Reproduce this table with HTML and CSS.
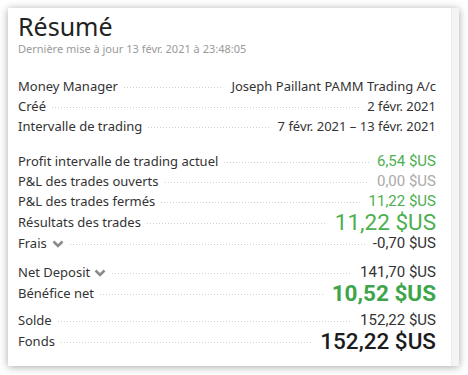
FILE: index.html
```html
<!DOCTYPE html>
<html lang="fr">
<head>
<meta charset="utf-8">
<title>Résumé</title>
<link rel="stylesheet" href="styles.css">
</head>
<body>
<div class="card">
  <div class="content">
    <h1 class="title">Résumé</h1>
    <div class="subtitle">Dernière mise à jour 13 févr. 2021 à 23:48:05</div>

    <div class="group g1">
      <div class="row"><span class="label">Money Manager</span><span class="dots"></span><span class="val text">Joseph Paillant PAMM Trading A/c</span></div>
      <div class="row"><span class="label">Créé</span><span class="dots"></span><span class="val text">2 févr. 2021</span></div>
      <div class="row"><span class="label">Intervalle de trading</span><span class="dots"></span><span class="val text">7 févr. 2021 – 13 févr. 2021</span></div>
    </div>

    <div class="group g2">
      <div class="row"><span class="label">Profit intervalle de trading actuel</span><span class="dots"></span><span class="val money green">6,54 $US</span></div>
      <div class="row"><span class="label">P&amp;L des trades ouverts</span><span class="dots"></span><span class="val money grey">0,00 $US</span></div>
      <div class="row"><span class="label">P&amp;L des trades fermés</span><span class="dots"></span><span class="val money green">11,22 $US</span></div>
      <div class="row big"><span class="label">Résultats des trades</span><span class="dots"></span><span class="val money large green">11,22 $US</span></div>
      <div class="row"><span class="label">Frais <svg class="chev" width="12" height="8" viewBox="0 0 12 8"><polyline points="1.5,1.5 6,6 10.5,1.5" fill="none" stroke="#8a8a8a" stroke-width="2.6"/></svg></span><span class="dots"></span><span class="val money">-0,70 $US</span></div>
    </div>

    <div class="group g3">
      <div class="row"><span class="label">Net Deposit<svg class="chev nd" width="12" height="8" viewBox="0 0 12 8"><polyline points="1.5,1.5 6,6 10.5,1.5" fill="none" stroke="#8a8a8a" stroke-width="2.6"/></svg></span><span class="dots"></span><span class="val money">141,70 $US</span></div>
      <div class="row big"><span class="label">Bénéfice net</span><span class="dots"></span><span class="val money large bold green2">10,52 $US</span></div>
    </div>

    <div class="group g4">
      <div class="row"><span class="label">Solde</span><span class="dots"></span><span class="val money">152,22 $US</span></div>
      <div class="row big"><span class="label">Fonds</span><span class="dots"></span><span class="val money large semibold dark">152,22 $US</span></div>
    </div>
  </div>
  <div class="scroll"></div>
</div>
</body>
</html>
```

FILE: styles.css
```css
html, body {
  margin: 0;
  padding: 0;
  background: #ffffff;
}
body {
  padding: 8px;
  font-family: "Noto Sans", "Open Sans", sans-serif;
  color: #333333;
}
.card {
  width: 451px;
  height: 358px;
  display: flex;
  background: #ffffff;
  box-shadow: 0 1px 8px rgba(0, 0, 0, 0.35);
  box-sizing: border-box;
}
.content {
  flex: 1;
  padding: 3px 15px 0 10px;
  min-width: 0;
}
.scroll {
  width: 7px;
  background: #f4f4f4;
  border-left: 1px solid #ececec;
}
.title {
  margin: 0;
  font-size: 25px;
  line-height: 30px;
  font-weight: 400;
  color: #222222;
}
.subtitle {
  font-size: 11px;
  line-height: 16px;
  color: #9a9a9a;
}
.group {
  display: flex;
  flex-direction: column;
}
.g1 { margin-top: 19px; }
.g2 { margin-top: 15px; }
.g3 { margin-top: 9px; }
.g4 { margin-top: 6px; }
.row {
  display: flex;
  align-items: center;
  height: 20px;
}
.row.big {
  height: 22px;
}
.label {
  display: flex;
  align-items: center;
  font-size: 13px;
  line-height: 20px;
  white-space: nowrap;
  color: #333333;
}
.chev {
  margin-left: 5px;
  margin-top: 1px;
}
.chev.nd {
  margin-left: 4px;
}
.dots {
  flex: 1;
  height: 1px;
  margin: 2px 8px 0 6px;
  background-image: linear-gradient(to right, #d0d0d0 1px, transparent 1px);
  background-size: 3px 1px;
  background-repeat: repeat-x;
}
.val {
  white-space: nowrap;
  line-height: 20px;
}
.text {
  font-size: 13px;
  color: #333333;
}
.money {
  font-family: Roboto, "Open Sans", sans-serif;
  font-size: 15px;
  color: #333333;
}
.green { color: #4caf50; }
.green2 { color: #3ea64a; }
.grey { color: #aaaaaa; }
.dark { color: #1c1c1c; }
.large {
  font-size: 22.5px;
  line-height: 22px;
}
.bold { font-weight: 700; font-size: 22.5px; }
.semibold { font-weight: 500; }
```
